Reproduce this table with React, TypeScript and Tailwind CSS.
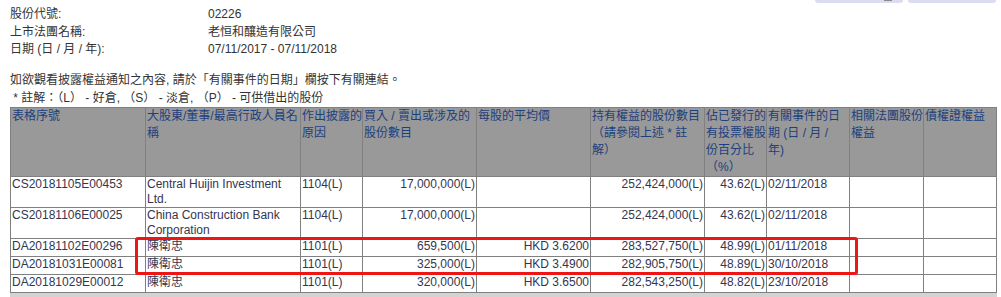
const headers: string[][] = [
  ['表格序號'],
  ['大股東/董事/最高行政人員名', '稱'],
  ['作出披露的', '原因'],
  ['買入 / 賣出或涉及的', '股份數目'],
  ['每股的平均價'],
  ['持有權益的股份數目', '（請參閱上述 * 註', '解）'],
  ['佔已發行的', '有投票權股', '份百分比', '（%）'],
  ['有關事件的日', '期 (日 / 月 /', '年)'],
  ['相關法團股份', '權益'],
  ['債權證權益'],
];

const colWidths = [135, 155, 62, 114, 114, 114, 62, 83, 74, 73];

const rows = [
  { id: 'CS20181105E00453', name: 'Central Huijin Investment Ltd.', reason: '1104(L)', shares: '17,000,000(L)', price: '', held: '252,424,000(L)', pct: '43.62(L)', date: '02/11/2018', h: 'h-[31px]' },
  { id: 'CS20181106E00025', name: 'China Construction Bank Corporation', reason: '1104(L)', shares: '17,000,000(L)', price: '', held: '252,424,000(L)', pct: '43.62(L)', date: '02/11/2018', h: 'h-[31px]' },
  { id: 'DA20181102E00296', name: '陳衛忠', reason: '1101(L)', shares: '659,500(L)', price: 'HKD 3.6200', held: '283,527,750(L)', pct: '48.99(L)', date: '01/11/2018', h: 'h-[18px]' },
  { id: 'DA20181031E00081', name: '陳衛忠', reason: '1101(L)', shares: '325,000(L)', price: 'HKD 3.4900', held: '282,905,750(L)', pct: '48.89(L)', date: '30/10/2018', h: 'h-[18px]' },
  { id: 'DA20181029E00012', name: '陳衛忠', reason: '1101(L)', shares: '320,000(L)', price: 'HKD 3.6500', held: '282,543,250(L)', pct: '48.82(L)', date: '23/10/2018', h: 'h-[18px]' },
];

const info = [
  ['股份代號:', '02226'],
  ['上市法團名稱:', '老恒和釀造有限公司'],
  ['日期 (日 / 月 / 年):', '07/11/2017 - 07/11/2018'],
];

export default function App() {
  const td = 'border border-[#808080] px-px align-top leading-[15px]';
  const nw = `${td} whitespace-nowrap`;

  return (
    <div className="relative w-[1001px] h-[297px] overflow-hidden bg-white font-['Liberation_Sans','Noto_Sans_CJK_TC',sans-serif] text-[12px] text-[#333]">
      {/* cut-off buttons at the top right */}
      <div className="absolute top-0 left-[815px] w-[88px] h-[3px] rounded-b-[4px] bg-[#dcdcf0]" />
      <div className="absolute top-0 left-[884px] w-[8px] h-[1px] bg-[#8a8a8a]" />
      <div className="absolute top-0 left-[908px] w-[88px] h-[3px] rounded-b-[4px] bg-[#dcdcf0]" />

      <div className="pl-[10px] pt-[6px]">
        <div className="leading-[17.5px]">
          {info.map(([label, value]) => (
            <div key={label} className="flex">
              <div className="w-[198px]">{label}</div>
              <div>{value}</div>
            </div>
          ))}
        </div>

        <div className="mt-[12.5px] leading-[18px]">
          <div>如欲觀看披露權益通知之內容, 請於「有關事件的日期」欄按下有關連結。</div>
          <div className="whitespace-pre"> * 註解：（L） - 好倉, （S） - 淡倉, （P） - 可供借出的股份</div>
        </div>

        <table className="table-fixed border-collapse w-[987px]">
          <colgroup>
            {colWidths.map((w, i) => (
              <col key={i} style={{ width: w }} />
            ))}
          </colgroup>
          <thead>
            <tr>
              {headers.map((lines, i) => (
                <th
                  key={i}
                  className="h-[69px] border border-[#808080] bg-[#999999] px-px align-top text-left font-normal leading-[17px] text-[#1c3f7e] whitespace-nowrap overflow-hidden"
                >
                  {lines.map((l, j) => (
                    <div key={j}>{l}</div>
                  ))}
                </th>
              ))}
            </tr>
          </thead>
          <tbody className="text-[#35354f]">
            {rows.map((r) => (
              <tr key={r.id}>
                <td className={`${nw} ${r.h}`}>{r.id}</td>
                <td className={`${td} ${r.h}`}>{r.name}</td>
                <td className={`${nw} ${r.h}`}>{r.reason}</td>
                <td className={`${nw} ${r.h} text-right`}>{r.shares}</td>
                <td className={`${nw} ${r.h} text-right`}>{r.price}</td>
                <td className={`${nw} ${r.h} text-right`}>{r.held}</td>
                <td className={`${nw} ${r.h} text-right`}>{r.pct}</td>
                <td className={`${nw} ${r.h}`}>{r.date}</td>
                <td className={`${td} ${r.h}`} />
                <td className={`${td} ${r.h}`} />
              </tr>
            ))}
          </tbody>
        </table>

        <div className="w-[987px] h-[6px] bg-[#d3d3d3]" />
      </div>

      {/* highlight box */}
      <div className="absolute left-[135px] top-[237px] w-[723px] h-[38px] border-[3px] border-[#ee1515] rounded-[3px]" />
    </div>
  );
}
